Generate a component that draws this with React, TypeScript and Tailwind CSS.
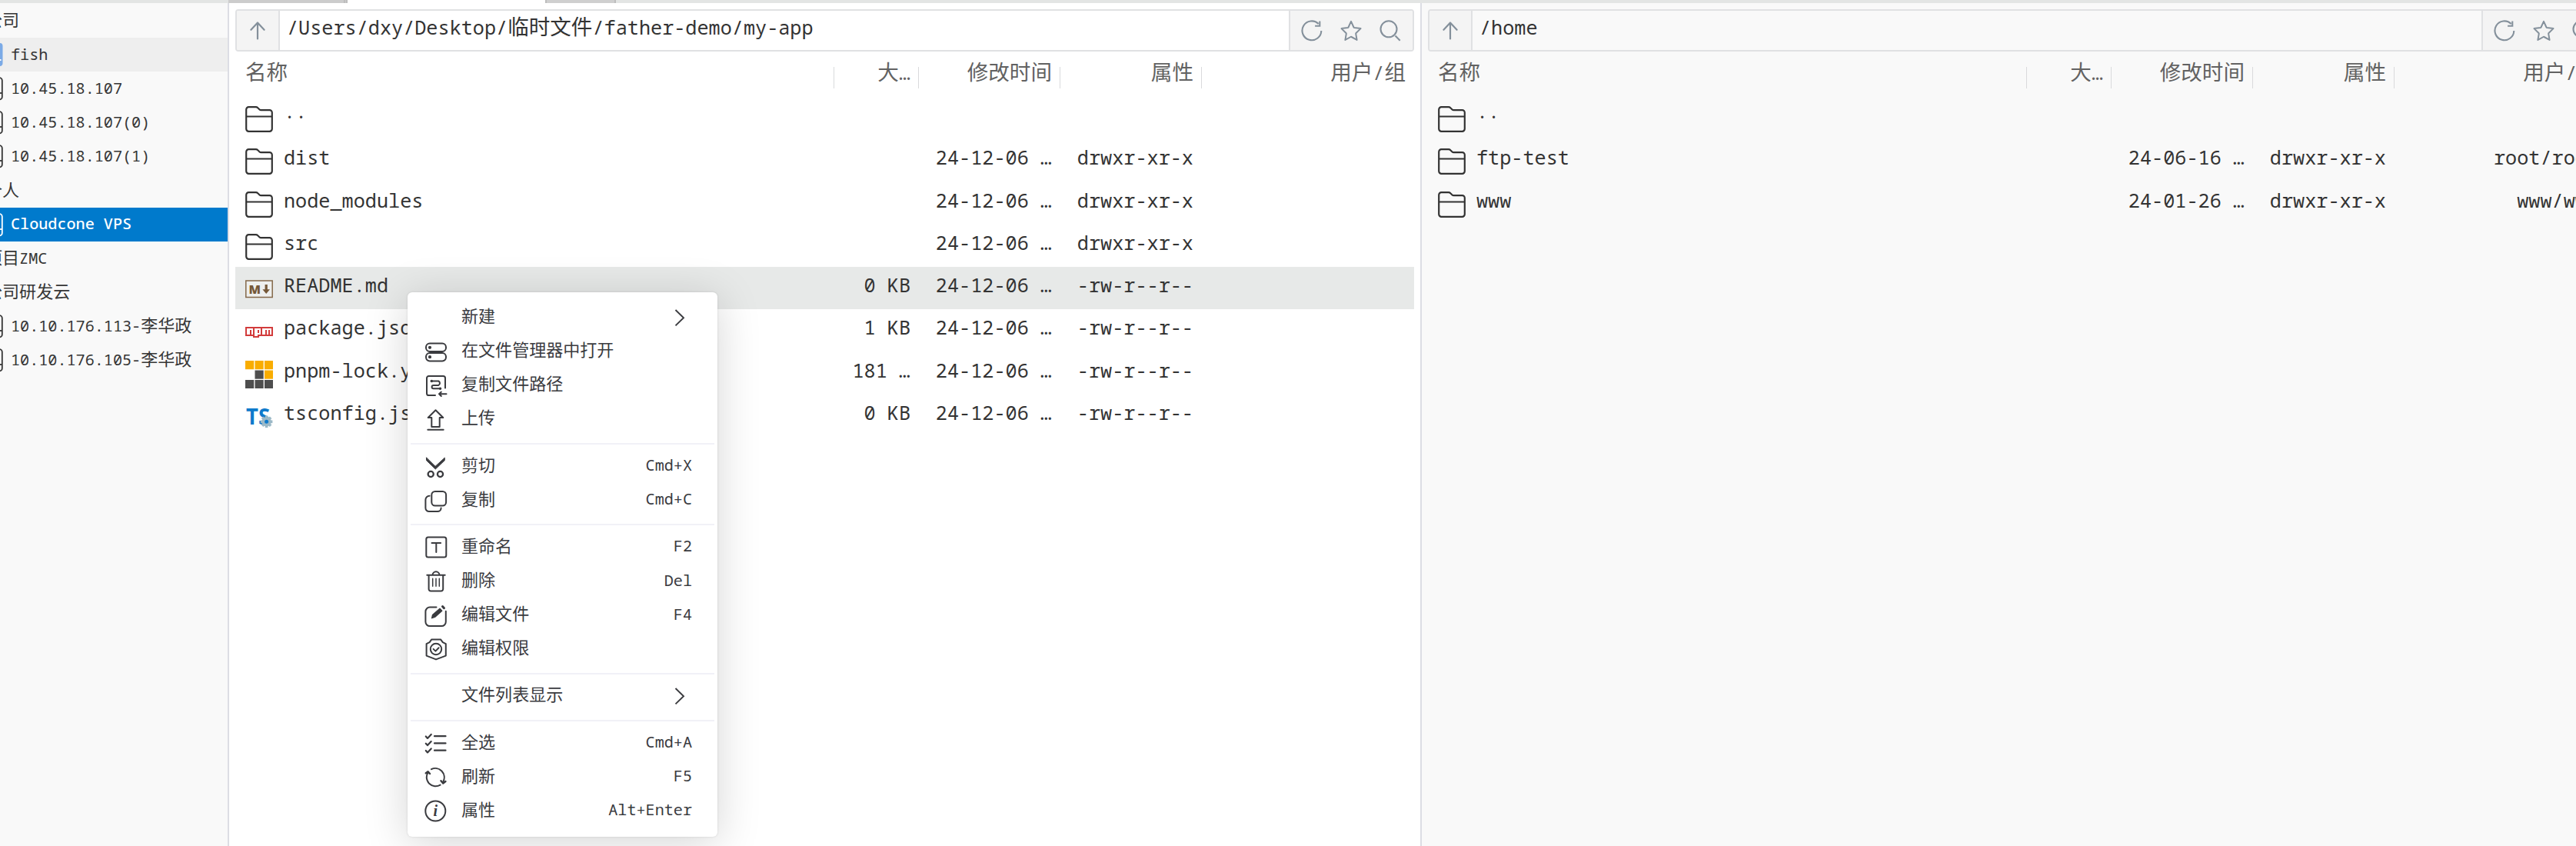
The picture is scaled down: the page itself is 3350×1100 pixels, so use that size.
import type { ReactNode } from "react";
import { FaNpm } from "react-icons/fa6";

/* Mixed-script text: Han runs are set 10% larger than the monospaced Latin. */
function Mixed({ children }: { children: string }) {
  const parts = children.split(/([\u4e00-\u9fff]+)/).filter(Boolean);
  return (
    <>
      {parts.map((part, i) =>
        /[\u4e00-\u9fff]/.test(part) ? (
          <span key={i} className="text-[1.095em] font-normal">
            {part}
          </span>
        ) : (
          <span key={i}>{part}</span>
        ),
      )}
    </>
  );
}

/* ---------- sidebar ---------- */

type Host = { label: string; kind: "group" | "local" | "host"; state?: "hover" | "active" };

const hosts: Host[] = [
  { label: "公司", kind: "group" },
  { label: "fish", kind: "local", state: "hover" },
  { label: "10.45.18.107", kind: "host" },
  { label: "10.45.18.107(0)", kind: "host" },
  { label: "10.45.18.107(1)", kind: "host" },
  { label: "个人", kind: "group" },
  { label: "Cloudcone VPS", kind: "host", state: "active" },
  { label: "项目ZMC", kind: "group" },
  { label: "公司研发云", kind: "group" },
  { label: "10.10.176.113-李华政", kind: "host" },
  { label: "10.10.176.105-李华政", kind: "host" },
];

function HostIcon({ kind }: { kind: Host["kind"] }) {
  if (kind === "local") {
    return (
      <svg className="-ml-7 mr-[11px] h-8 w-8 shrink-0" viewBox="0 0 32 32">
        <rect x="1" y="1" width="30.5" height="30" rx="4" fill="#7baae6" />
        <path d="M22 23h7.5" stroke="#fff" strokeWidth="2.2" />
      </svg>
    );
  }
  return (
    <svg className="-ml-7 mr-[11px] h-8 w-8 shrink-0" viewBox="0 0 32 32" fill="none" stroke="currentColor" strokeWidth="1.8">
      <rect x="2" y="2" width="28.8" height="28.5" rx="3.5" />
      <path d="M2 22h28.8" />
    </svg>
  );
}

function Sidebar() {
  return (
    <aside className="flex w-[296px] shrink-0 flex-col overflow-hidden bg-[#f9f9f9] pt-px text-[20.15px]">
      {hosts.map((h, i) => {
        const tone =
          h.state === "active"
            ? "bg-[#007acc] text-white font-medium"
            : h.state === "hover"
              ? "bg-[#eeeeee] text-[#363636]"
              : "text-[#363636]";
        return (
          <div key={i} className={`flex h-[44.1px] shrink-0 items-center whitespace-nowrap ${tone}`}>
            {h.kind === "group" ? (
              <span className="-ml-[19px] pb-[3px] leading-10">
                <Mixed>{h.label}</Mixed>
              </span>
            ) : (
              <>
                <HostIcon kind={h.kind} />
                <span className="-ml-[1px] pb-[3px] leading-10">
                  <Mixed>{h.label}</Mixed>
                </span>
              </>
            )}
          </div>
        );
      })}
    </aside>
  );
}

/* ---------- file icons ---------- */

function FolderIcon() {
  return (
    <svg className="h-[34px] w-9" viewBox="0 0 36 34" fill="none" stroke="#333" strokeWidth="2.2" strokeLinejoin="round">
      <path d="M1.2 4.4a3.2 3.2 0 0 1 3.2-3.2h9.3c1 0 1.9.4 2.6 1.1l2 1.9c.6.6 1.4.9 2.3.9H31.6a3.2 3.2 0 0 1 3.2 3.2V29.6a3.2 3.2 0 0 1-3.2 3.2H4.4a3.2 3.2 0 0 1-3.2-3.2z" />
      <path d="M1.2 13.5h33.6" />
    </svg>
  );
}

function MarkdownIcon() {
  return (
    <svg className="h-6 w-9" viewBox="0 0 36 24">
      <rect x="0.8" y="1" width="34.4" height="21.5" fill="#eeefee" stroke="#84684a" strokeWidth="1.5" />
      <text x="4.5" y="17.8" textLength="15.5" lengthAdjust="spacingAndGlyphs" className="font-['Open_Sans',sans-serif] text-[16.5px] font-extrabold" fill="#755838">
        M
      </text>
      <path d="M25.6 6h3.2v6.2h3.2l-4.8 5.8-4.8-5.8h3.2z" fill="#755838" />
    </svg>
  );
}

function NpmIcon() {
  return <FaNpm className="h-8 w-9 text-[#d23c3c]" preserveAspectRatio="none" />;
}

function PnpmIcon() {
  const cells = [
    [0, 0, 1], [1, 0, 1], [2, 0, 1],
    [1, 1, 0], [2, 1, 1],
    [0, 2, 0], [1, 2, 0], [2, 2, 0],
  ];
  return (
    <svg className="h-9 w-9" viewBox="0 0 36 36">
      {cells.map(([x, y, hot], i) => (
        <rect key={i} x={x * 12.5} y={y * 12.5} width="11.2" height="11.2" fill={hot ? "#f9ad00" : "#4e4e4e"} />
      ))}
    </svg>
  );
}

function TsConfigIcon() {
  const teeth = [0, 45, 90, 135, 180, 225, 270, 315];
  return (
    <svg className="h-9 w-9" viewBox="0 0 36 36">
      <text x="1" y="27.5" textLength="31" lengthAdjust="spacingAndGlyphs" className="font-['Open_Sans',sans-serif] text-[28px] font-bold" fill="#0e7acb">
        TS
      </text>
      <g fill="#9cb9c7">
        {teeth.map((a) => (
          <rect key={a} x="25.8" y="16.5" width="3.6" height="4" transform={`rotate(${a} 27.6 24.3)`} />
        ))}
        <circle cx="27.6" cy="24.3" r="6.2" />
      </g>
      <circle cx="27.6" cy="24.3" r="2.5" fill="#0e7acb" />
    </svg>
  );
}

const fileIcons = {
  folder: <FolderIcon />,
  md: <MarkdownIcon />,
  npm: <NpmIcon />,
  pnpm: <PnpmIcon />,
  ts: <TsConfigIcon />,
};

/* ---------- file panes ---------- */

type Entry = {
  name: string;
  icon: keyof typeof fileIcons;
  size?: string;
  date?: string;
  mode?: string;
  owner?: string;
  selected?: boolean;
};

const localFiles: Entry[] = [
  { name: "..", icon: "folder" },
  { name: "dist", icon: "folder", date: "24-12-06 …", mode: "drwxr-xr-x" },
  { name: "node_modules", icon: "folder", date: "24-12-06 …", mode: "drwxr-xr-x" },
  { name: "src", icon: "folder", date: "24-12-06 …", mode: "drwxr-xr-x" },
  { name: "README.md", icon: "md", size: "0 KB", date: "24-12-06 …", mode: "-rw-r--r--", selected: true },
  { name: "package.json", icon: "npm", size: "1 KB", date: "24-12-06 …", mode: "-rw-r--r--" },
  { name: "pnpm-lock.yaml", icon: "pnpm", size: "181 …", date: "24-12-06 …", mode: "-rw-r--r--" },
  { name: "tsconfig.json", icon: "ts", size: "0 KB", date: "24-12-06 …", mode: "-rw-r--r--" },
];

const remoteFiles: Entry[] = [
  { name: "..", icon: "folder" },
  { name: "ftp-test", icon: "folder", date: "24-06-16 …", mode: "drwxr-xr-x", owner: "root/root" },
  { name: "www", icon: "folder", date: "24-01-26 …", mode: "drwxr-xr-x", owner: "www/www" },
];

function PathBar({ path }: { path: string }) {
  return (
    <div className="flex h-[55px] shrink-0 overflow-hidden rounded-[4px] border-2 border-[#e0e1e3]">
      <div className="flex w-[56px] shrink-0 items-center justify-center border-r-2 border-[#e0e1e3] bg-[#f4f4f4]">
        <svg className="h-7 w-7" viewBox="0 0 28 28" fill="none" stroke="#84909b" strokeWidth="2.2" strokeLinecap="round" strokeLinejoin="round">
          <path d="M14 24.5V3.5M5.4 12.8 14 3.5l8.6 9.3" />
        </svg>
      </div>
      <div className="min-w-0 flex-1 pl-[9px] leading-[42px] whitespace-nowrap">
        <Mixed>{path}</Mixed>
      </div>
      <div className="flex w-[161px] shrink-0 items-center gap-[23px] border-l-2 border-[#e0e1e3] bg-[#f4f4f4] pl-[14px]">
        <svg className="h-7 w-7" viewBox="0 0 28 28" fill="none" stroke="#84909b" strokeWidth="2.1">
          <path d="M26.3 14a12.4 12.4 0 1 1-3.6-8.9" />
          <path d="M24.3 1.5v6.3h-6.2" />
        </svg>
        <svg className="h-7 w-7" viewBox="0 0 28 28" fill="none" stroke="#84909b" strokeWidth="2" strokeLinejoin="round">
          <path d="M14 1.9l3.5 7.6c.1.3.4.5.7.5l8.3 1.1-6 5.9c-.2.2-.3.5-.3.8l1.4 8.1-7.1-3.9a1 1 0 0 0-1 0l-7.1 3.9 1.4-8.1c0-.3-.1-.6-.3-.8l-6-5.9 8.3-1.1c.3 0 .6-.2.7-.5z" />
        </svg>
        <svg className="h-7 w-7" viewBox="0 0 28 28" fill="none" stroke="#84909b" strokeWidth="2.1">
          <circle cx="12" cy="11.8" r="10.5" />
          <path d="M20.500 20.500l6.200 6.200" />
        </svg>
      </div>
    </div>
  );
}

const columns = "grid shrink-0 grid-cols-[779px_110px_184px_184px_276px]";

function HeaderCell({ label, divided = true }: { label: string; divided?: boolean }) {
  return (
    <div className="flex items-center justify-end">
      <span className="pr-[10px] pb-[5px] leading-[50px] whitespace-nowrap">
        <Mixed>{label}</Mixed>
      </span>
      <span className={divided ? "mt-2 h-7 w-px bg-[#d9dadc]" : "w-px"} />
    </div>
  );
}

function FilePane({ path, files, className }: { path: string; files: Entry[]; className: string }) {
  return (
    <section className={`flex w-[1549px] shrink-0 flex-col px-2 pt-2 text-[25.2px] ${className}`}>
      <PathBar path={path} />
      <div className={`${columns} h-[59px] text-[#626262]`}>
        <div className="flex items-center justify-between pl-[13px]">
          <span className="pb-[5px] leading-[50px]">
            <Mixed>名称</Mixed>
          </span>
          <span className="mt-2 h-7 w-px bg-[#d9dadc]" />
        </div>
        <HeaderCell label="大…" />
        <HeaderCell label="修改时间" />
        <HeaderCell label="属性" />
        <HeaderCell label="用户/组" divided={false} />
      </div>
      {files.map((f) => (
        <div key={f.name} className={`${columns} h-[55.25px] leading-[47px] whitespace-nowrap ${f.selected ? "bg-[#e7e9e8]" : ""}`}>
          <div className="flex pl-[13px]">
            <div className="flex w-9 shrink-0 items-center justify-center pt-[3px]">{fileIcons[f.icon]}</div>
            <span className={`pl-[14px] ${f.name === ".." ? "leading-[37px]" : ""}`}>{f.name}</span>
          </div>
          <span className="pr-[11px] text-right">{f.size}</span>
          <span className="pr-[11px] text-right">{f.date}</span>
          <span className="pr-[11px] text-right">{f.mode}</span>
          <span className="pr-[11px] text-right">{f.owner}</span>
        </div>
      ))}
    </section>
  );
}

/* ---------- context menu ---------- */

function Glyph({ children }: { children: ReactNode }) {
  return (
    <svg className="h-7 w-7 overflow-visible" viewBox="0 0 28 28" fill="none" stroke="#3a3b3f" strokeWidth="2" strokeLinecap="round" strokeLinejoin="round">
      {children}
    </svg>
  );
}

const glyphs: Record<string, ReactNode> = {
  server: (
    <>
      <rect x="1" y="2.6" width="26" height="10.4" rx="4.8" />
      <rect x="1" y="15" width="26" height="10.4" rx="4.8" />
      <circle cx="6" cy="7.8" r="1.1" fill="#3a3b3f" />
      <circle cx="6" cy="20.2" r="1.1" fill="#3a3b3f" />
    </>
  ),
  path: (
    <>
      <path d="M13 26H4.6A2.6 2.6 0 0 1 2 23.4V3.6A2.6 2.6 0 0 1 4.6 1h18.8A2.6 2.6 0 0 1 26 3.6v13" />
      <path d="M8.5 7.5h8.8a3 3 0 0 1 0 5.4h-6.5a2.2 2.2 0 0 0 0 4.4h8" />
      <circle cx="8.3" cy="7.5" r=".8" fill="#3a3b3f" />
      <circle cx="19.5" cy="17.3" r=".8" fill="#3a3b3f" />
      <path d="M27.5 24.3H18M20.8 21.6 18 24.3l2.8 2.7" />
    </>
  ),
  upload: (
    <>
      <path d="M13.5 1.3 23.3 11h-4.6v12H8.3V11H3.7z" />
      <path d="M3.3 26.7h20.4" />
    </>
  ),
  cut: (
    <>
      <path d="M1.5 1.2V4.6L13.3 16 25.3 4.6V1.2L13.3 12.2z" fill="#3a3b3f" strokeWidth="1" />
      <circle cx="7.2" cy="22.5" r="3.6" strokeWidth="2.3" />
      <circle cx="19.5" cy="22.5" r="3.6" strokeWidth="2.3" />
    </>
  ),
  copy: (
    <>
      <rect x="8.3" y="1" width="18.8" height="18.5" rx="4.5" />
      <path d="M5.6 6.8A5 5 0 0 0 .4 11.8V22.5a4.6 4.6 0 0 0 4.6 4.6h11a4.6 4.6 0 0 0 4.6-4.6" />
    </>
  ),
  rename: (
    <g transform="translate(0 -1.6)">
      <rect x="1.3" y="1" width="26" height="26" rx="2.5" />
      <path d="M8.5 8.5h11.6M14.3 8.5v12" />
    </g>
  ),
  trash: (
    <g transform="translate(0 -.5)">
      <path d="M2.3 5.3h23.4M9.5 5.3a4.5 4.5 0 0 1 9 0M4.6 5.3V23.5a2.5 2.5 0 0 0 2.5 2.5H20.7a2.5 2.5 0 0 0 2.5-2.5V5.3" />
      <path d="M9.7 9.8v10M14 9.8v10M18.3 9.8v10" strokeWidth="1.5" />
    </g>
  ),
  edit: (
    <>
      <path d="M14.5 2.6H6A5.6 5.6 0 0 0 .4 8.2V21.5A5.6 5.6 0 0 0 6 27.1H21.2a5.6 5.6 0 0 0 5.6-5.6V7.8" />
      <path d="M8.5 16.8l1-4.3L19 4.2l2.8 3L12.5 15.5z" fill="#3a3b3f" strokeWidth="1.2" />
      <path d="M22.5 1.5l2 2.2" strokeWidth="3" />
    </>
  ),
  shield: (
    <g transform="translate(0 -.4)">
      <path d="M8.3.8H20l2.8 3.7 4 2V22L14 26.8 1.6 22V6.500l4-2z" />
      <circle cx="14" cy="13.4" r="7.2" />
      <path d="M10.6 13.3l2.8 2.7 4.2-4.3" />
    </g>
  ),
  select: (
    <path d="M12 3.2h14.5M12 12.4h14.5M12 21.7h14.5M.8 3.5l2.2 2.4 4.7-5M.8 12.7l2.2 2.4 4.7-5M.8 22l2.2 2.4 4.7-5" strokeWidth="2.2" />
  ),
  refresh: (
    <>
      <path d="M8 2.2A11.7 11.7 0 0 1 23.5 18M19.5 22.6A11.7 11.7 0 0 1 3.2 7" />
      <path d="M.8 7.3 3.6 5.2 6 8M20.5 17.2l2.7 3.3 3.2-2.5" strokeWidth="2.4" />
    </>
  ),
  info: (
    <>
      <circle cx="13.3" cy="12.5" r="13" />
      <text x="13.3" y="19" textAnchor="middle" stroke="none" fill="#3a3b3f" className="font-['Liberation_Serif',serif] text-[20px] font-bold italic">
        i
      </text>
    </>
  ),
};

type MenuItem = { label: string; icon?: string; keys?: string; submenu?: boolean };

const menu: MenuItem[][] = [
  [
    { label: "新建", submenu: true },
    { label: "在文件管理器中打开", icon: "server" },
    { label: "复制文件路径", icon: "path" },
    { label: "上传", icon: "upload" },
  ],
  [
    { label: "剪切", icon: "cut", keys: "Cmd+X" },
    { label: "复制", icon: "copy", keys: "Cmd+C" },
  ],
  [
    { label: "重命名", icon: "rename", keys: "F2" },
    { label: "删除", icon: "trash", keys: "Del" },
    { label: "编辑文件", icon: "edit", keys: "F4" },
    { label: "编辑权限", icon: "shield" },
  ],
  [{ label: "文件列表显示", submenu: true }],
  [
    { label: "全选", icon: "select", keys: "Cmd+A" },
    { label: "刷新", icon: "refresh", keys: "F5" },
    { label: "属性", icon: "info", keys: "Alt+Enter" },
  ],
];

function ContextMenu() {
  return (
    <div className="absolute top-[380px] left-[530px] flex h-[708px] w-[403px] flex-col rounded-[6px] bg-white px-1 pt-3 text-[20.15px] text-[#3a3b3f] shadow-[0_8px_56px_rgba(0,0,0,0.17),0_0_3px_rgba(0,0,0,0.12)]">
      {menu.map((group, g) => (
        <div key={g} className="flex flex-col">
          {g > 0 && <div className="my-[7.5px] h-[2px] bg-[#f1f1f7]" />}
          {group.map((item) => (
            <div key={item.label} className="flex h-[44.15px] items-center pr-[29px] pl-[19px]">
              <div className="h-7 w-7 shrink-0">{item.icon && <Glyph>{glyphs[item.icon]}</Glyph>}</div>
              <span className="flex-1 pb-[7px] pl-[19px] leading-9">
                <Mixed>{item.label}</Mixed>
              </span>
              {item.keys && <span className="pb-[7px] leading-9">{item.keys}</span>}
              {item.submenu && (
                <svg className="mr-[9px] h-6 w-[14px]" viewBox="0 0 14 24" fill="none" stroke="#3a3b3f" strokeWidth="1.9">
                  <path d="M1.5 1 12 11.2 1.5 21.4" />
                </svg>
              )}
            </div>
          ))}
        </div>
      ))}
    </div>
  );
}

/* ---------- window ---------- */

export default function App() {
  return (
    <div className="relative flex h-[1100px] w-full flex-col overflow-hidden bg-white font-['Noto_Sans_Mono','DejaVu_Sans_Mono','Noto_Sans_CJK_SC',monospace] font-[450] text-[#333333]">
      <div className="flex h-1 shrink-0 bg-[#e3e5e4]">
        <div className="w-[297px]" />
        <div className="w-[155px] border-r-[5px] border-double border-[#bdbdbd] bg-[#cccccc]" />
        <div className="w-[257px] bg-white" />
        <div className="w-[92px] border-x-2 border-[#bdbdbd] bg-[#cfcfcf]" />
      </div>
      <div className="flex min-h-0 flex-1">
        <Sidebar />
        <div className="w-[2px] shrink-0 bg-[#dcdde4]" />
        <FilePane path="/Users/dxy/Desktop/临时文件/father-demo/my-app" files={localFiles} className="bg-white" />
        <div className="w-[2px] shrink-0 bg-[#dcdde4]" />
        <FilePane path="/home" files={remoteFiles} className="bg-[#f9f9f9]" />
      </div>
      <ContextMenu />
    </div>
  );
}
